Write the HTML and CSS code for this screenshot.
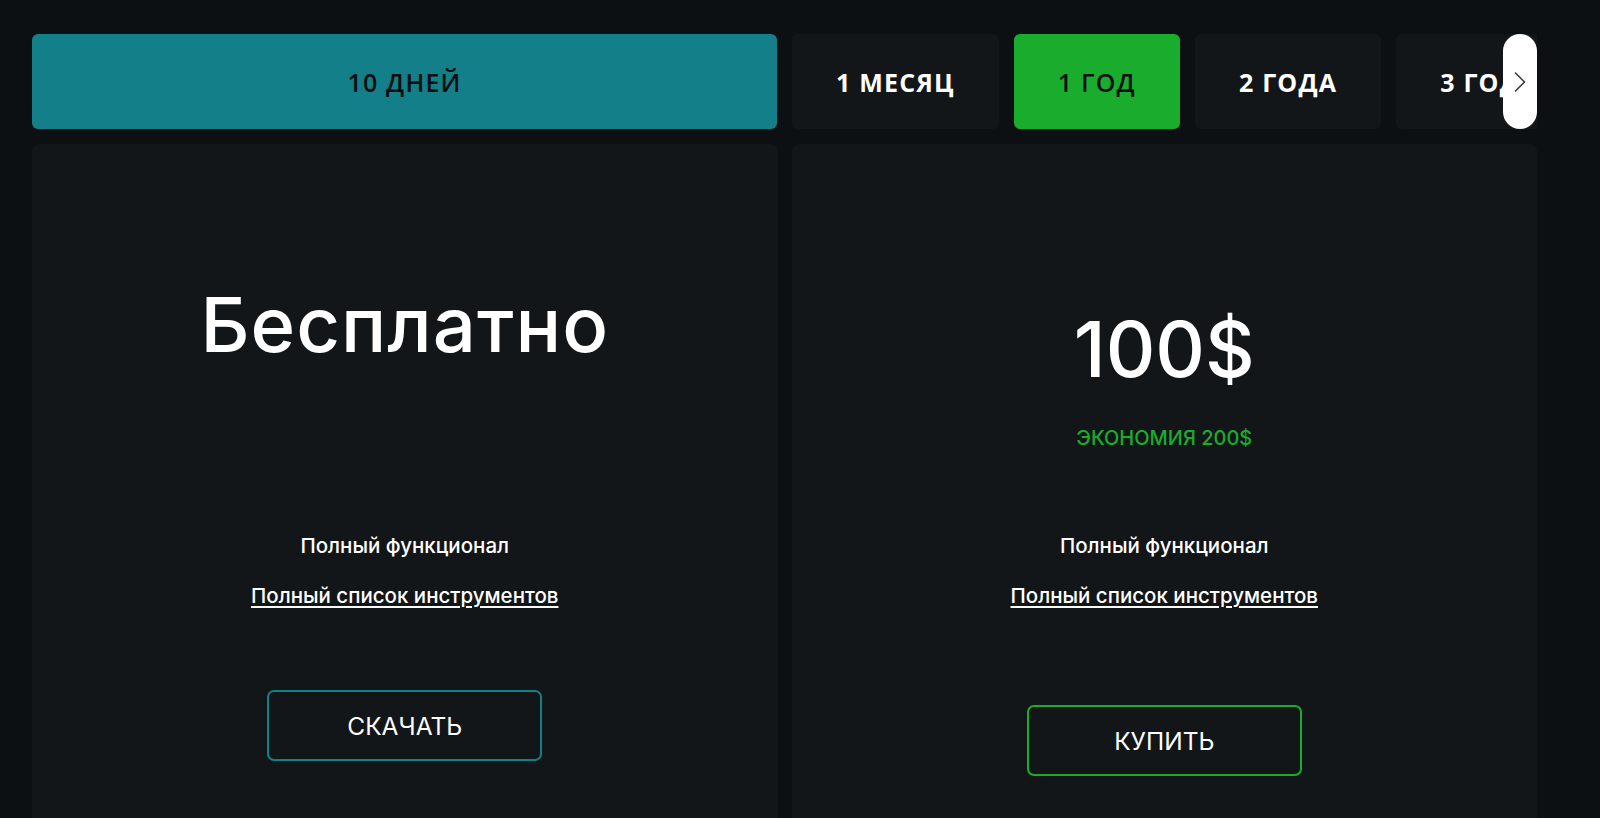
FILE: index.html
```html
<!DOCTYPE html>
<html lang="ru">
<head>
<meta charset="utf-8">
<title>Тарифы</title>
<link rel="stylesheet" href="styles.css">
</head>
<body>
<div class="wrap">
  <div class="tabs-viewport">
    <div class="tabs">
      <div class="tab tab--wide tab--teal">10 ДНЕЙ</div>
      <div class="tab">1 МЕСЯЦ</div>
      <div class="tab tab--green">1 ГОД</div>
      <div class="tab">2 ГОДА</div>
      <div class="tab">3 ГОДА</div>
    </div>
    <button class="tabs-next" aria-label="Далее">
      <svg width="12" height="20" viewBox="0 0 12 20"><path d="M1.5 1 L10.5 10 L1.5 19" fill="none" stroke="#3a3a3a" stroke-width="1.6" stroke-linecap="round" stroke-linejoin="round"/></svg>
    </button>
  </div>
  <div class="cards">
    <div class="card card--free">
      <div class="card-head">
        <div class="title">Бесплатно</div>
      </div>
      <div class="features">
        <div class="feature">Полный функционал</div>
        <a class="feature feature--link" href="#">Полный список инструментов</a>
      </div>
      <a class="btn btn--teal" href="#">СКАЧАТЬ</a>
    </div>
    <div class="card card--paid">
      <div class="card-head">
        <div class="price">100$</div>
        <div class="saving">ЭКОНОМИЯ 200$</div>
      </div>
      <div class="features">
        <div class="feature">Полный функционал</div>
        <a class="feature feature--link" href="#">Полный список инструментов</a>
      </div>
      <a class="btn btn--green" href="#">КУПИТЬ</a>
    </div>
  </div>
</div>
</body>
</html>
```

FILE: styles.css
```css
html, body {
  margin: 0;
  padding: 0;
  height: 100%;
  overflow: hidden;
  background: #0d1012;
}
body {
  font-family: Inter, "Noto Sans", sans-serif;
  color: #ffffff;
}
.wrap {
  width: 1505px;
  padding: 34px 0 0 32px;
  display: flex;
  flex-direction: column;
  gap: 15px;
}
.tabs-viewport {
  position: relative;
  overflow: hidden;
  height: 95px;
}
.tabs {
  display: flex;
  gap: 15px;
  height: 95px;
}
.tab {
  flex: 0 0 auto;
  display: flex;
  align-items: center;
  justify-content: center;
  padding: 0 44px;
  background: #131618;
  border-radius: 6px;
  font-family: "Open Sans", "Noto Sans", sans-serif;
  font-size: 25px;
  font-weight: 700;
  letter-spacing: 1.2px;
  color: #ffffff;
  white-space: nowrap;
}
.tab--wide {
  flex: 0 0 745px;
  padding: 0;
}
.tab--teal {
  background: #137f88;
  color: #0b0e10;
  font-weight: 600;
}
.tab--green {
  background: #19ac2d;
  color: #0b0e10;
  font-weight: 600;
}
.tabs-next {
  position: absolute;
  right: 0;
  top: 0;
  width: 34px;
  height: 95px;
  border: 0;
  padding: 0;
  border-radius: 17px;
  background: #ffffff;
  display: flex;
  align-items: center;
  justify-content: center;
  cursor: pointer;
}
.cards {
  display: grid;
  grid-template-columns: 1fr 1fr;
  gap: 14px;
}
.card {
  background: #131618;
  border-radius: 8px;
  height: 720px;
  display: flex;
  flex-direction: column;
  align-items: center;
}
.card-head {
  height: 390px;
  box-sizing: border-box;
  display: flex;
  flex-direction: column;
  align-items: center;
}
.card--free .card-head {
  padding-top: 142px;
}
.card--paid .card-head {
  padding-top: 167px;
}
.title {
  font-size: 76px;
  line-height: 76px;
  font-weight: 500;
  letter-spacing: 1px;
}
.price {
  font-size: 77px;
  line-height: 77px;
  font-weight: 500;
}
.saving {
  margin-top: 38px;
  font-size: 20px;
  line-height: 24px;
  font-weight: 500;
  color: #19ac2d;
}
.features {
  display: flex;
  flex-direction: column;
  align-items: center;
  gap: 26px;
}
.feature {
  font-size: 20.5px;
  line-height: 24px;
  font-weight: 500;
  color: #ffffff;
}
.feature--link {
  text-decoration: underline;
  text-underline-offset: 3px;
  text-decoration-thickness: 1.5px;
}
.btn {
  box-sizing: border-box;
  width: 275px;
  height: 71px;
  border-radius: 7px;
  border: 2px solid;
  display: flex;
  align-items: center;
  justify-content: center;
  font-size: 24.5px;
  color: #ffffff;
  text-decoration: none;
}
.card--free .btn {
  margin-top: 82px;
}
.card--paid .btn {
  margin-top: 97px;
}
.btn--teal {
  border-color: #137f88;
}
.btn--green {
  border-color: #19ac2d;
}
```
